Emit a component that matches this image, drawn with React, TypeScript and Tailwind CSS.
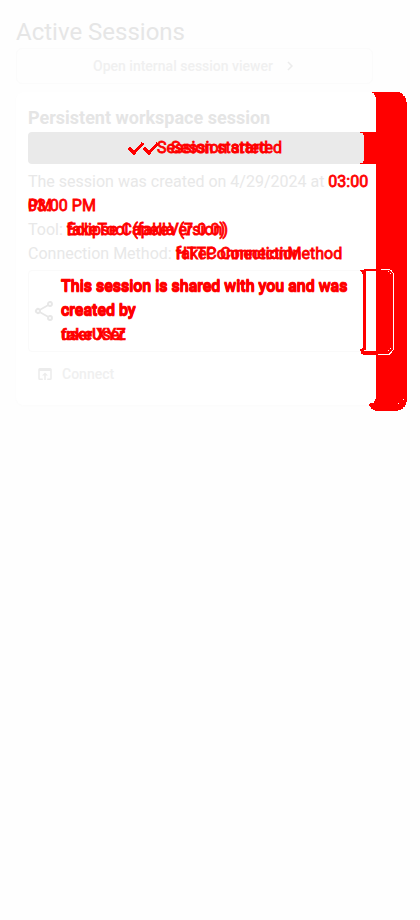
import React from "react";

function Pair({ a, b, className = "[-webkit-text-stroke:0.8px_#ff0000]" }: { a: string; b: string; className?: string }) {
  return (
    <span className={"inline-grid whitespace-nowrap text-[#ff0000] " + className}>
      <span className="col-start-1 row-start-1">{a}</span>
      <span className="col-start-1 row-start-1">{b}</span>
    </span>
  );
}

function ShiftedText({ text }: { text: string }) {
  return (
    <span className="inline-grid whitespace-nowrap text-[#ff0000] [-webkit-text-stroke:0.7px_#ff0000]">
      <span className="col-start-1 row-start-1">{text}</span>
      <span className="col-start-1 row-start-1 pt-px">{text}</span>
    </span>
  );
}

function ChangedEdges() {
  return (
    <svg className="pointer-events-none absolute left-0 top-0" width="420" height="920" shapeRendering="crispEdges" fill="#ff0000">
      <path d="M372 92H400V93H402V94H403V96H405V98H406V102H407V402H406V405H405V407H403V409H401V410H398V411H375V410H373V409H371V407H370V406H369V404H370V403H374V401H375V399H376V355H363V354H361V351H360V349H362V348H363V274H362V272H361V271H360V270H364V269H376V164H360V163H363V161H364V135H363V133H360V132H376V97H375V95H374V93H372Z" />
      <path d="M366 271H376V351H364V350H366Z" fill="#ffffff" />
      <path d="M381 269.5H389L391.5 271L393.5 274V349L391.5 352L389 354.5H378" fill="none" stroke="#fefefe" />
      <path d="M388 271h1v1h-1zM390 273h1v1h-1zM388 350h1v1h-1zM390 348h1v1h-1zM403 399h1v1h-1zM398 403h1v1h-1z" fill="#fefefe" />
    </svg>
  );
}

export default function App() {
  return (
    <div className="relative h-[920px] w-[420px] overflow-hidden bg-[#fefefe] pl-4 pt-4 font-['Roboto',sans-serif] text-base leading-6 text-[#e8e8e8]">
      <h1 className="h-8 text-2xl leading-8 text-[#e6e6e6]">Active Sessions</h1>
      <div className="flex h-9 w-[357px] items-center justify-center rounded-md border border-[#fbfbfb] pl-[3px] text-sm font-medium text-[#f0f0f0]">
        <span>Open internal session viewer</span>
        <svg className="ml-2 h-[18px] w-[18px]" viewBox="0 0 24 24" fill="#ececec"><path d="M10 6 8.59 7.41 13.17 12l-4.58 4.59L10 18l6-6z" /></svg>
      </div>
      <div className="mt-2 h-[313px] w-[360px] rounded-lg bg-white px-3 pt-3 shadow-[0_1px_3px_#fbfbfb]">
        <h2 className="mb-0.5 mt-0.5 text-lg font-bold leading-6 text-[#e5e5e5]">Persistent workspace session</h2>
        <div className="relative h-8 w-[336px] rounded bg-[#eaeaea] text-base leading-8 text-[#ff0000] [-webkit-text-stroke:0.8px_#ff0000]">
          <svg className="absolute left-[99px] top-1.5 h-5 w-10" viewBox="0 0 40 20" fill="none" stroke="#ff0000" strokeWidth="3" shapeRendering="crispEdges"><path d="m2 10 5 5L16 5M17 10l5 5L31 5" /></svg>
          <span className="absolute left-[129px]">Session started</span>
          <span className="absolute left-[143px]">Session started</span>
        </div>
        <div className="mt-1.5 whitespace-nowrap">The session was created on 4/29/2024 at <Pair a="03:00" b="" /></div>
        <div className="flex h-6"><Pair a="03:00 PM" b="PM" /></div>
        <div className="flex h-6 gap-1"><span>Tool:</span><Pair a="Eclipse Capella (7.0.0)" b="fakeTool (fakeVersion)" /></div>
        <div className="flex h-6 gap-1"><span>Connection Method:</span><Pair a="HTTP Connection" b="fakeConnectionMethod" /></div>
        <div className="mt-1 flex h-[82px] w-[336px] items-center rounded border border-[#fafafa] pl-[3px]">
          <svg className="h-6 w-6 shrink-0" viewBox="0 0 24 24" fill="#e7e7e7"><path d="M18 16.08c-.76 0-1.44.3-1.96.77L8.91 12.7a3.3 3.3 0 0 0 0-1.39l7.05-4.11A2.99 2.99 0 1 0 15 5c0 .24.04.47.09.7L8.04 9.81a3 3 0 1 0 0 4.38l7.12 4.16A2.92 2.92 0 1 0 18 16.08M18 4a1 1 0 1 1 0 2 1 1 0 0 1 0-2M6 13a1 1 0 1 1 0-2 1 1 0 0 1 0 2m12 7a1 1 0 1 1 0-2 1 1 0 0 1 0 2" /></svg>
          <div className="mb-0.5 ml-[5px] grid auto-rows-[24px] justify-items-start text-base font-medium leading-6">
            <ShiftedText text="This session is shared with you and was" />
            <ShiftedText text="created by" />
            <Pair a="fakeUser" b="user XYZ" className="pt-px [-webkit-text-stroke:0.6px_#ff0000]" />
          </div>
        </div>
        <div className="mt-2.5 flex h-6 items-center pl-2 text-sm font-medium text-[#f0f0f0]">
          <svg className="h-[18px] w-[18px]" viewBox="0 0 24 24" fill="#ececec"><path d="M19 4H5a2 2 0 0 0-2 2v12a2 2 0 0 0 2 2h4v-2H5V8h14v10h-4v2h4a2 2 0 0 0 2-2V6a2 2 0 0 0-2-2m-7 6-4 4h3v6h2v-6h3z" /></svg>
          <span className="ml-2">Connect</span>
        </div>
      </div>
      <ChangedEdges />
    </div>
  );
}
